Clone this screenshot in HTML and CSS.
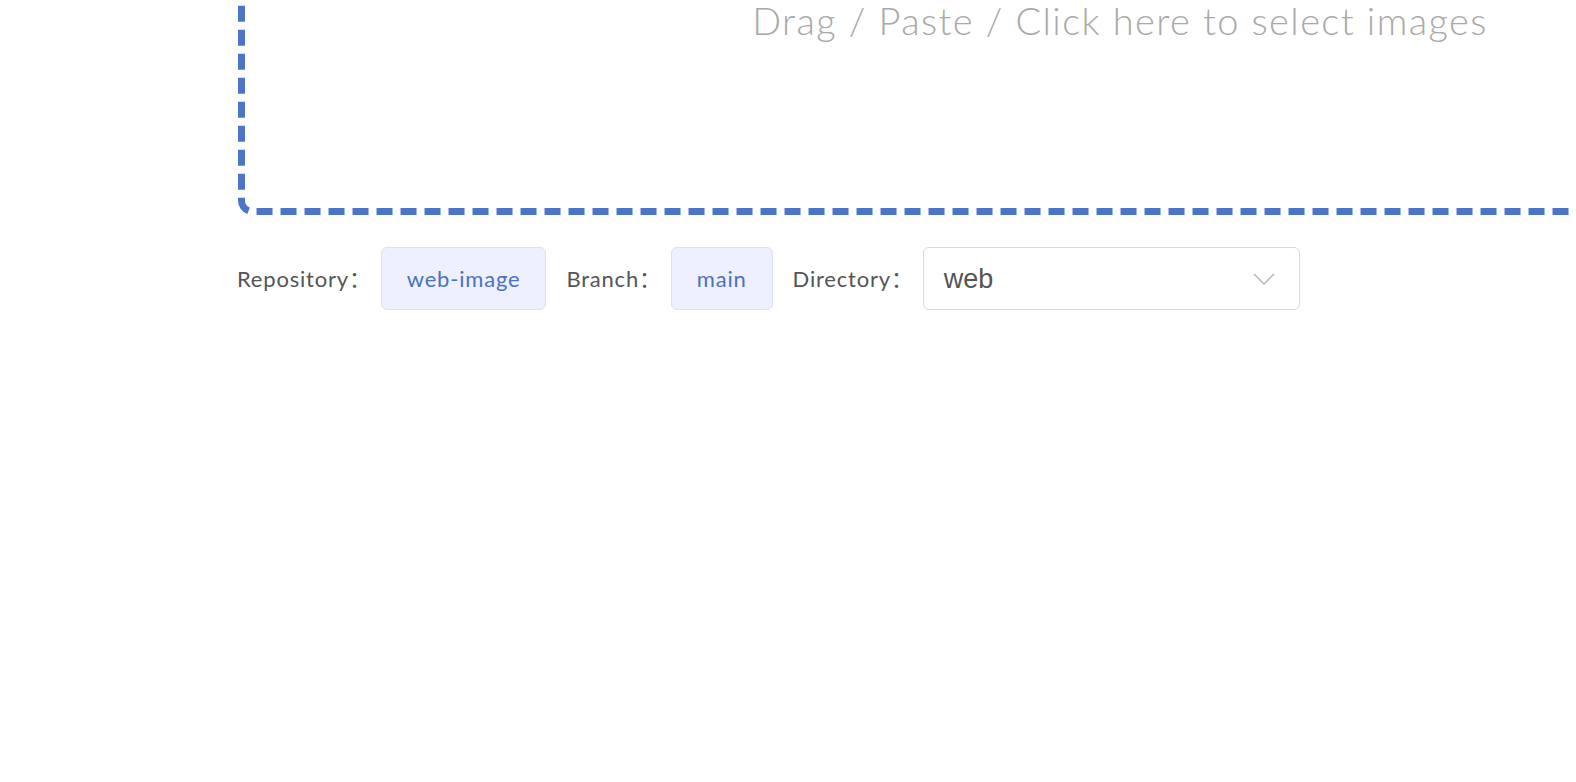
FILE: index.html
```html
<!DOCTYPE html>
<html lang="en">
<head>
<meta charset="utf-8">
<title>Upload</title>
<link rel="stylesheet" href="styles.css">
</head>
<body>
<div class="page">
  <div class="uploader">
    <svg class="uploader-border" width="1764" height="386" viewBox="0 0 1764 386" aria-hidden="true">
      <path d="M3.5 0 V371.5 A11 11 0 0 0 14.5 382.5 H1764" fill="none" stroke="#4b76c5" stroke-width="7" stroke-dasharray="16 8" stroke-dashoffset="15.3"/>
    </svg>
    <div class="uploader-text">Drag / Paste / Click here to select images</div>
  </div>
  <div class="settings">
    <span class="label">Repository：</span>
    <span class="tag">web-image</span>
    <span class="label">Branch：</span>
    <span class="tag">main</span>
    <span class="label">Directory：</span>
    <div class="select">
      <span class="select-value">web</span>
      <svg class="chevron" width="22" height="12" viewBox="0 0 22 12" aria-hidden="true">
        <path d="M1 1 L11 11 L21 1" fill="none" stroke="#b4b4b4" stroke-width="1.4"/>
      </svg>
    </div>
  </div>
</div>
</body>
</html>
```
FILE: styles.css
```css
html, body {
  margin: 0;
  padding: 0;
  background: #ffffff;
}

.page {
  height: 100vh;
  overflow: hidden;
  padding-left: 238px;
  font-family: Lato, "Noto Sans CJK SC", sans-serif;
}

.uploader {
  position: relative;
  width: 1764px;
  height: 386px;
  margin-top: -171px;
  box-sizing: border-box;
  padding-top: 168px;
  display: flex;
  justify-content: center;
  align-items: flex-start;
}

.uploader-border {
  position: absolute;
  left: 0;
  top: 0;
}

.uploader-text {
  font-weight: 300;
  font-size: 38px;
  letter-spacing: 1.4px;
  line-height: 46px;
  color: #a9a9a9;
  white-space: nowrap;
}

.settings {
  display: flex;
  align-items: center;
  gap: 20px;
  margin-top: 32px;
  margin-left: -1px;
}

.label {
  font-size: 22px;
  line-height: 30px;
  letter-spacing: 0.8px;
  color: #555555;
  white-space: nowrap;
  margin-right: -11px;
}

.tag {
  box-sizing: border-box;
  height: 63px;
  line-height: 61px;
  padding: 0 25px;
  border: 1px solid #dce0f8;
  border-radius: 6px;
  background: #eef0fd;
  color: #4a73c2;
  font-size: 22px;
  letter-spacing: 0.8px;
  white-space: nowrap;
}

.select {
  box-sizing: border-box;
  width: 377px;
  height: 63px;
  border: 1px solid #dadada;
  border-radius: 6px;
  display: flex;
  align-items: center;
  justify-content: space-between;
  padding: 0 24px 0 20px;
}

.select-value {
  font-family: "Liberation Sans", Arial, sans-serif;
  font-size: 27px;
  line-height: 32px;
  color: #555555;
}

.chevron {
  display: block;
}
```
